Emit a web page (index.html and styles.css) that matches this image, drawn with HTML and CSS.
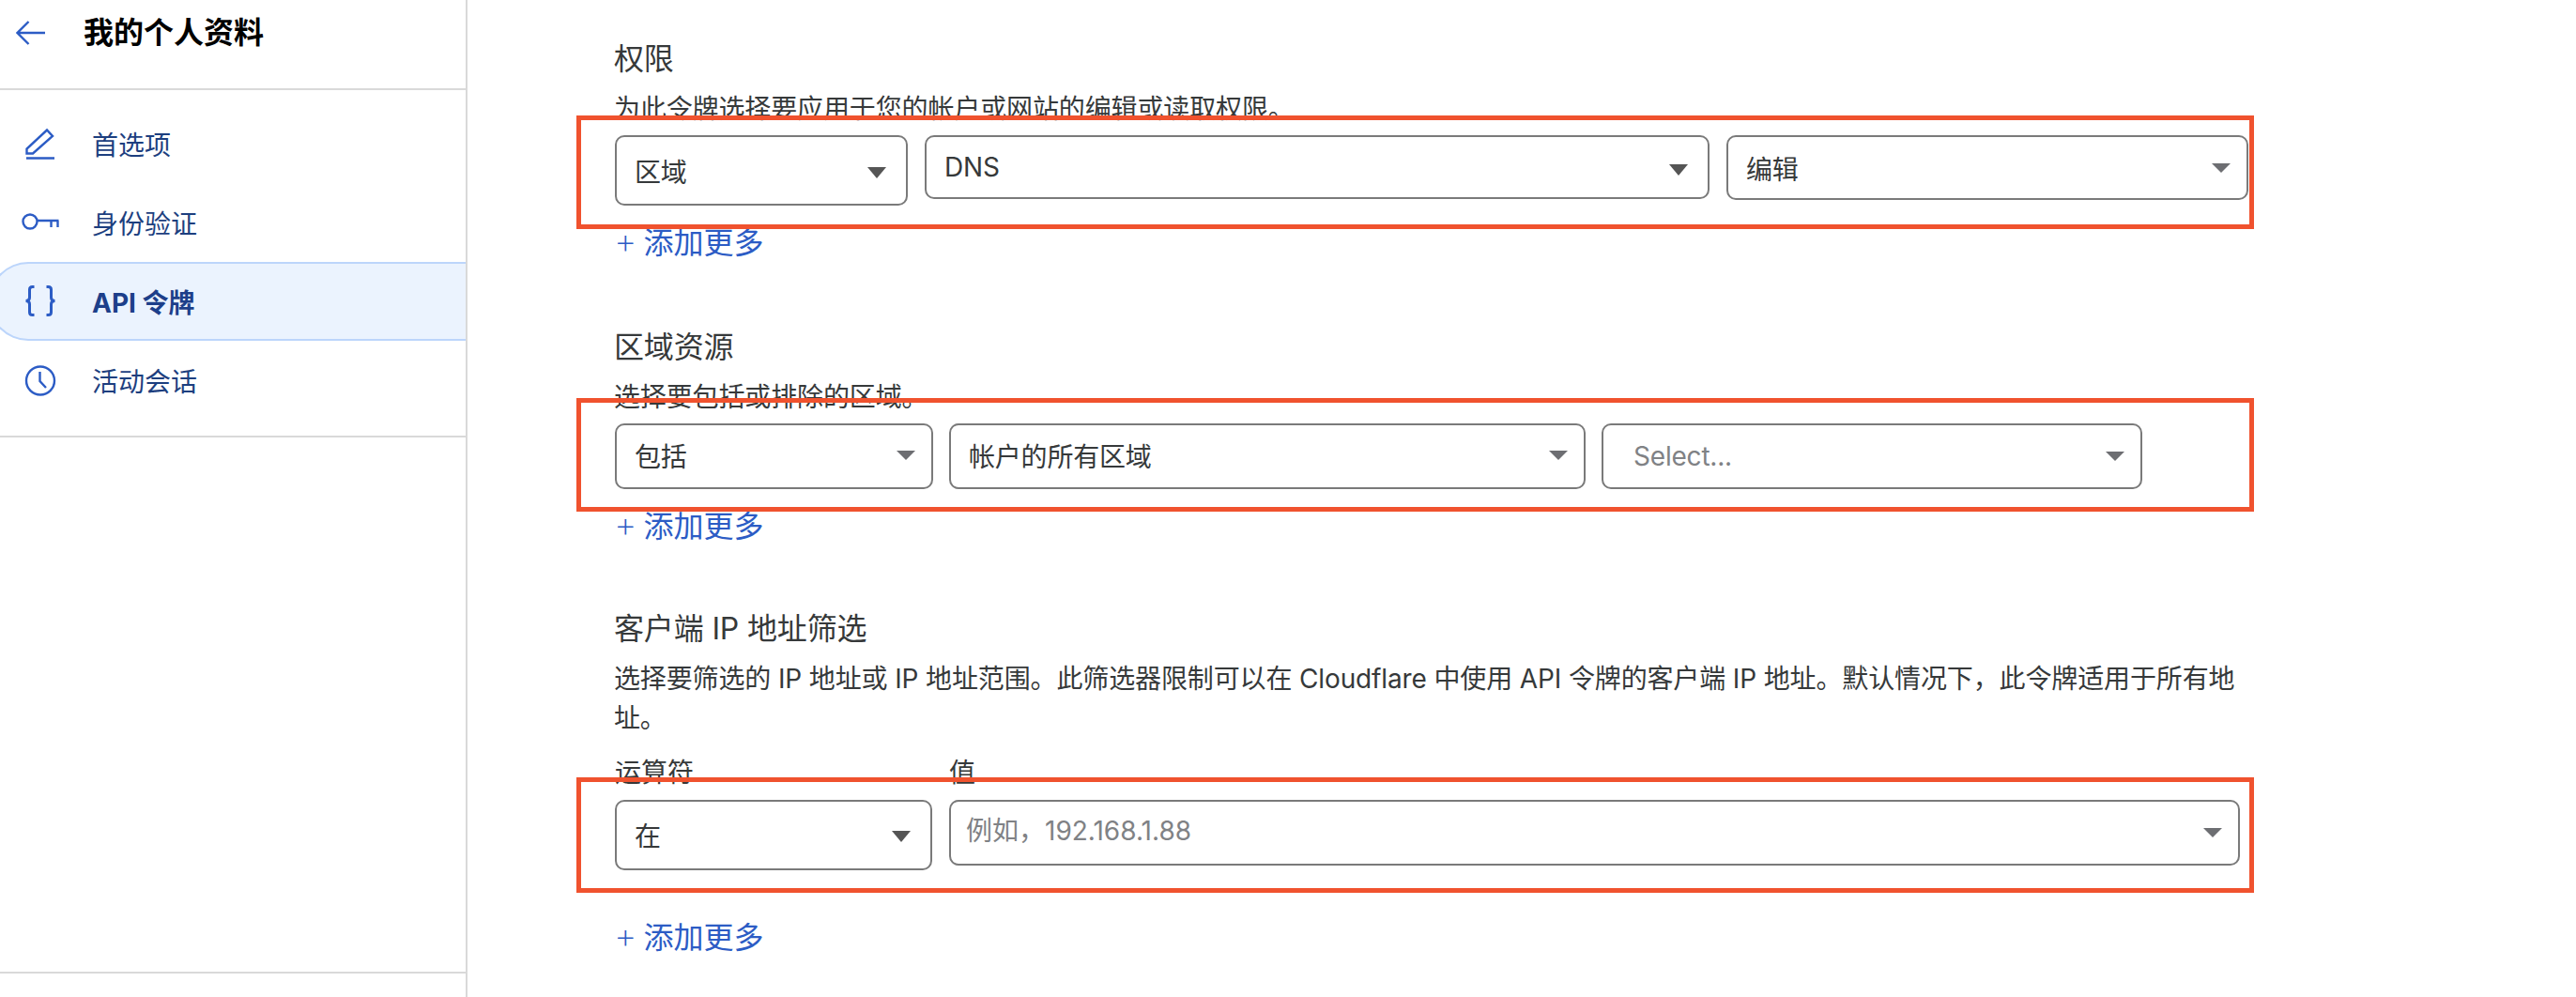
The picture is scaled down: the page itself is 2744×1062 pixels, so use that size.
FILE: index.html
```html
<!DOCTYPE html>
<html lang="zh-CN">
<head>
    <meta charset="UTF-8">
    <meta name="viewport" content="width=device-width, initial-scale=1.0">
    <title>我的个人资料</title>
    <link rel="stylesheet" href="styles.css">
</head>
<body>
    <div class="page">
        <!-- Sidebar -->
        <aside class="sidebar">
            <header class="side-header">
                <svg class="back-icon" viewBox="0 0 32 26">
                    <path d="M31 13H1.500M13.500 1L1.500 13l12 12"/>
                </svg>
                <h1>我的个人资料</h1>
            </header>
            <nav class="side-nav">
                <a class="nav-item">
                    <svg class="nav-icon" viewBox="0 0 40 40">
                        <path d="M5.500 30.500v-5L27 5.500l6 6.500-21 18.500zM5 35.500h30"/>
                    </svg>
                    首选项
                </a>
                <a class="nav-item">
                    <svg class="nav-icon" viewBox="0 0 40 40">
                        <circle cx="9" cy="19" r="7.500"/>
                        <path d="M17 18h22.500M31.500 18v7M38.500 18v7"/>
                    </svg>
                    身份验证
                </a>
                <a class="nav-item active">
                    <svg class="nav-icon nav-icon-bold" viewBox="0 0 40 40">
                        <path d="M13.500 4.500h-2q-3 0-3 3v8.500q0 3.500-4 3.500 4 0 4 3.500v8.500q0 3 3 3h2"/>
                        <path d="M26.500 4.500h2q3 0 3 3v8.500q0 3.500 4 3.500-4 0-4 3.500v8.500q0 3-3 3h-2"/>
                    </svg>
                    API 令牌
                </a>
                <a class="nav-item">
                    <svg class="nav-icon" viewBox="0 0 40 40">
                        <circle cx="20" cy="20.500" r="15"/>
                        <path d="M19.500 11v10l6.500 7"/>
                    </svg>
                    活动会话
                </a>
            </nav>
            <div class="side-spacer"></div>
            <div class="side-footer"></div>
        </aside>

        <!-- Main form -->
        <main class="content">
            <section class="section">
                <h2>权限</h2>
                <p class="desc">为此令牌选择要应用于您的帐户或网站的编辑或读取权限。</p>
                <div class="row row-perm">
                    <div class="select select-tall">区域<span class="arrow arrow-dark"></span></div>
                    <div class="select select-mid">DNS<span class="arrow arrow-dark"></span></div>
                    <div class="select select-mid2">编辑<span class="arrow"></span></div>
                    <div class="mark mark-perm"></div>
                </div>
                <a class="add-more"><span>+</span> 添加更多</a>
            </section>

            <section class="section section-zone">
                <h2>区域资源</h2>
                <p class="desc">选择要包括或排除的区域。</p>
                <div class="row row-zone">
                    <div class="select select-flat select-up">包括<span class="arrow"></span></div>
                    <div class="select select-flat select-up">帐户的所有区域<span class="arrow"></span></div>
                    <div class="select select-flat select-empty">Select...<span class="arrow"></span></div>
                    <div class="mark mark-zone"></div>
                </div>
                <a class="add-more"><span>+</span> 添加更多</a>
            </section>

            <section class="section">
                <h2>客户端 IP 地址筛选</h2>
                <p class="desc">选择要筛选的 IP 地址或 IP 地址范围。此筛选器限制可以在 Cloudflare 中使用 API 令牌的客户端 IP 地址。默认情况下，此令牌适用于所有地址。</p>
                <div class="row row-ip labels">
                    <label>运算符</label>
                    <label>值</label>
                </div>
                <div class="row row-ip">
                    <div class="select select-tall select-up">在<span class="arrow arrow-dark"></span></div>
                    <div class="select select-flat select-value">例如，192.168.1.88<span class="arrow"></span></div>
                    <div class="mark mark-ip"></div>
                </div>
                <a class="add-more add-more-far"><span>+</span> 添加更多</a>
            </section>
        </main>
    </div>
</body>
</html>
```

FILE: styles.css
```css
body {
    font-family: Inter, "Noto Sans CJK SC", sans-serif;
    background-color: #ffffff;
    color: #36393a;
    margin: 0;
    padding: 0;
}

.page {
    display: flex;
    height: 100vh;
    overflow: hidden;
}

/* Sidebar */
.sidebar {
    flex: 0 0 498px;
    box-sizing: border-box;
    display: flex;
    flex-direction: column;
    border-right: 2px solid #d9d9d9;
    overflow: hidden;
}

.side-header {
    display: flex;
    align-items: flex-start;
    gap: 40px;
    height: 94px;
    box-sizing: border-box;
    padding: 14px 0 0 17px;
}

.side-header h1 {
    margin: 0;
    font-size: 32px;
    line-height: 42px;
    font-weight: 700;
    color: #000000;
}

.back-icon {
    width: 32px;
    height: 26px;
    margin-top: 8px;
    fill: none;
    stroke: #2c5cc5;
    stroke-width: 2.4;
}

.side-nav {
    display: flex;
    flex-direction: column;
    padding: 15px 0 17px;
    border-top: 2px solid #d9d9d9;
    border-bottom: 2px solid #d9d9d9;
}

.nav-item {
    display: flex;
    align-items: center;
    gap: 35px;
    height: 84px;
    box-sizing: border-box;
    padding-left: 23px;
    font-size: 28px;
    color: #1d3f7f;
}

.nav-item.active {
    margin-left: -12px;
    padding-left: 33px;
    background-color: #ebf3fe;
    border: 2px solid #bcd5fb;
    border-right: none;
    border-radius: 42px 0 0 42px;
    font-weight: 700;
    color: #1d3f8a;
}

.nav-icon {
    flex: none;
    width: 40px;
    height: 40px;
    fill: none;
    stroke: #2c5cc5;
    stroke-width: 2.4;
}

.nav-icon-bold {
    stroke-width: 3;
}

.side-spacer {
    flex: 1;
    border-bottom: 2px solid #d9d9d9;
}

.side-footer {
    height: 25px;
}

/* Main form */
.content {
    flex: 1;
    padding: 42px 347px 0 157px;
}

.section {
    margin-bottom: 70px;
}

.section-zone {
    margin-bottom: 68px;
}

h2 {
    margin: 0 0 11px -1px;
    font-size: 32px;
    line-height: 42px;
    font-weight: 400;
    letter-spacing: -0.15px;
}

.desc {
    margin: 0 0 7px -1px;
    font-size: 28px;
    line-height: 42px;
    letter-spacing: -0.13px;
}

.row {
    position: relative;
    display: grid;
    align-items: start;
}

.row-perm {
    grid-template-columns: 312px 836px 556px;
    gap: 18px;
}

.row-zone {
    grid-template-columns: 339px 678px 576px;
    gap: 17px;
}

.row-ip {
    grid-template-columns: 338px 1375px;
    gap: 18px;
}

.labels {
    margin: 16px 0 8px;
}

label {
    font-size: 28px;
    line-height: 42px;
}

.select {
    display: flex;
    align-items: center;
    justify-content: space-between;
    box-sizing: border-box;
    padding: 0 17px 0 19px;
    border: 2px solid #7a7a7a;
    border-radius: 10px;
    font-size: 28px;
    letter-spacing: -0.2px;
    background-color: #ffffff;
}

.select-tall {
    height: 75px;
    padding-right: 21px;
}

.select-mid {
    height: 68px;
    padding-right: 21px;
}

.select-mid2 {
    height: 69px;
}

.select-flat {
    height: 70px;
}

.select-up {
    padding-bottom: 2px;
}

.select-empty {
    padding-left: 32px;
    color: #808285;
}

.select-value {
    padding-left: 16px;
    padding-bottom: 8px;
    letter-spacing: 0;
    color: #808285;
}

.select-value .arrow {
    margin-top: 8px;
}

.arrow {
    width: 0;
    height: 0;
    border-left: 10px solid transparent;
    border-right: 10px solid transparent;
    border-top: 10px solid #6d6e72;
}

.arrow-dark {
    margin-top: 5px;
    border-top: 12px solid #555555;
}

/* Red annotation boxes drawn over the form */
.mark {
    position: absolute;
    left: -41px;
    right: -4px;
    border: 5px solid #f0522e;
    pointer-events: none;
}

.mark-perm {
    top: -21px;
    bottom: -25px;
}

.mark-zone {
    top: -27px;
    bottom: -24px;
}

.mark-ip {
    top: -24px;
    bottom: -24px;
}

.add-more {
    display: block;
    height: 42px;
    margin-top: 18px;
    font-size: 32px;
    line-height: 42px;
    color: #2c5cc5;
}

.add-more span {
    margin: 0 -2px 0 -1px;
    font-size: 38px;
    line-height: 1;
    font-weight: 200;
}

.add-more-far {
    margin-top: 50px;
}
```
